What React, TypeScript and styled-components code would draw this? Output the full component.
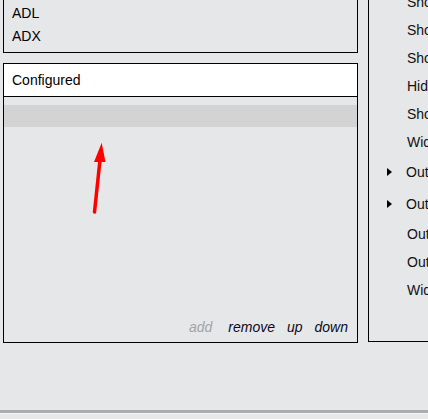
import styled, { createGlobalStyle } from "styled-components";

const GlobalStyle = createGlobalStyle`
  html, body {
    margin: 0;
    padding: 0;
    background: #e6e7e9;
    overflow: hidden;
  }
  body {
    font-family: "Liberation Sans", Arial, sans-serif;
    font-size: 14px;
    color: #000;
  }
`;

const Screen = styled.div`
  display: flex;
  flex-direction: column;
  width: 428px;
  height: 419px;
  overflow: hidden;
`;

const Main = styled.div`
  flex: 1;
  display: flex;
  gap: 10px;
  padding-left: 3px;
  min-height: 0;
`;

const LeftColumn = styled.div`
  display: flex;
  flex-direction: column;
  gap: 10px;
  width: 355px;
  flex-shrink: 0;
`;

const SymbolList = styled.div`
  height: 53px;
  box-sizing: border-box;
  border: 1px solid #000;
  border-top: none;
  display: flex;
  flex-direction: column;
  justify-content: flex-end;
  padding: 0 0 4px 8px;
`;

const SymbolItem = styled.div`
  height: 23px;
  line-height: 23px;
`;

const ConfiguredPanel = styled.div`
  position: relative;
  height: 280px;
  box-sizing: border-box;
  border: 1px solid #000;
  display: flex;
  flex-direction: column;
`;

const PanelHeader = styled.div`
  height: 32px;
  line-height: 33px;
  background: #fff;
  border-bottom: 1px solid #000;
  padding-left: 8px;
`;

const EntryList = styled.div`
  flex: 1;
  padding-top: 8px;
`;

const Entry = styled.div<{ $selected?: boolean }>`
  height: 22px;
  background: ${(p) => (p.$selected ? "#d3d3d3" : "transparent")};
`;

const Actions = styled.div`
  display: flex;
  justify-content: flex-end;
  gap: 12px;
  padding: 0 9px 7px 0;
`;

const ActionLink = styled.span<{ $disabled?: boolean }>`
  font-style: italic;
  color: ${(p) => (p.$disabled ? "#a3a3a8" : "#0a0a1e")};
  margin-right: ${(p) => (p.$disabled ? "4px" : "0")};
  line-height: 16px;
`;

const Pointer = styled.svg`
  position: absolute;
  left: 85px;
  top: 75px;
`;

const SettingsPanel = styled.div`
  flex: 1;
  height: 342px;
  box-sizing: border-box;
  border-left: 1px solid #000;
  border-bottom: 1px solid #000;
  overflow: hidden;
`;

const SettingsList = styled.div`
  display: flex;
  flex-direction: column;
  margin-top: -12px;
`;

const SettingRow = styled.div<{ $tall?: boolean }>`
  display: flex;
  align-items: center;
  height: ${(p) => (p.$tall ? "32px" : "28px")};
  padding-left: ${(p) => (p.$tall ? "18px" : "38px")};
  white-space: nowrap;
  color: #111;
`;

const Caret = styled.span`
  width: 0;
  height: 0;
  border-top: 4px solid transparent;
  border-bottom: 4px solid transparent;
  border-left: 5px solid #000;
  margin-right: 14px;
`;

const StatusBar = styled.div`
  height: 6px;
  border-top: 3px solid #adadad;
  box-shadow: inset 0 1px 0 #f5f5f5;
  background: #e8e8e9;
`;

const settings: { label: string; group?: boolean }[] = [
  { label: "Show toolbar" },
  { label: "Show status bar" },
  { label: "Show grid lines" },
  { label: "Hide empty rows" },
  { label: "Show legend" },
  { label: "Width" },
  { label: "Outputs", group: true },
  { label: "Outlines", group: true },
  { label: "Output format" },
  { label: "Output path" },
  { label: "Width" },
];

export default function App() {
  return (
    <>
      <GlobalStyle />
      <Screen>
        <Main>
          <LeftColumn>
            <SymbolList>
              <SymbolItem>ADL</SymbolItem>
              <SymbolItem>ADX</SymbolItem>
            </SymbolList>
            <ConfiguredPanel>
              <PanelHeader>Configured</PanelHeader>
              <EntryList>
                <Entry $selected />
              </EntryList>
              <Actions>
                <ActionLink $disabled>add</ActionLink>
                <ActionLink>remove</ActionLink>
                <ActionLink>up</ActionLink>
                <ActionLink>down</ActionLink>
              </Actions>
              <Pointer width="30" height="80" viewBox="0 0 30 80">
                <path d="M5.5 73 L11 21" stroke="#ff0000" strokeWidth="3.5" strokeLinecap="round" />
                <path d="M12.7 3.7 L16.5 23 L5 23 Z" fill="#ff0000" />
              </Pointer>
            </ConfiguredPanel>
          </LeftColumn>
          <SettingsPanel>
            <SettingsList>
              {settings.map((s, i) => (
                <SettingRow key={i} $tall={s.group}>
                  {s.group && <Caret />}
                  {s.label}
                </SettingRow>
              ))}
            </SettingsList>
          </SettingsPanel>
        </Main>
        <StatusBar />
      </Screen>
    </>
  );
}
